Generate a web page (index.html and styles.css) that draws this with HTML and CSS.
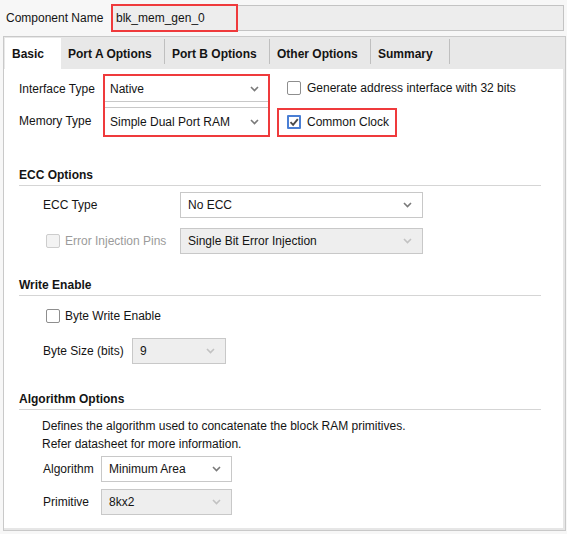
FILE: index.html
```html
<!DOCTYPE html>
<html lang="en">
<head>
    <meta charset="UTF-8">
    <title>Block Memory Generator</title>
    <link rel="stylesheet" href="styles.css">
</head>
<body>
    <!-- Nom du composant -->
    <div class="name-row">
        <span class="name-label">Component Name</span>
        <div class="name-field">
            <span class="hl name-hl">blk_mem_gen_0</span>
        </div>
    </div>

    <div class="panel">
        <!-- Onglets -->
        <div class="tabs">
            <div class="tab tab-basic active">Basic</div>
            <div class="tab tab-porta">Port A Options</div>
            <div class="sep"></div>
            <div class="tab tab-portb">Port B Options</div>
            <div class="sep"></div>
            <div class="tab tab-other">Other Options</div>
            <div class="sep"></div>
            <div class="tab tab-summary">Summary</div>
            <div class="sep"></div>
        </div>

        <div class="content">
            <!-- Interface / Memory type -->
            <div class="top">
                <div class="top-labels">
                    <div class="lbl-row">Interface Type</div>
                    <div class="lbl-row tall">Memory Type</div>
                </div>
                <div class="hl hl-group">
                    <div class="select first">
                        <span>Native</span>
                        <svg class="chev" width="9" height="6" viewBox="0 0 9 6"><path d="M1 1l3.5 3.5L8 1" fill="none" stroke="#7a7a7a" stroke-width="1.6"/></svg>
                    </div>
                    <div class="select second">
                        <span>Simple Dual Port RAM</span>
                        <svg class="chev" width="9" height="6" viewBox="0 0 9 6"><path d="M1 1l3.5 3.5L8 1" fill="none" stroke="#7a7a7a" stroke-width="1.6"/></svg>
                    </div>
                </div>
                <div class="top-checks">
                    <div class="check-row gen-row">
                        <span class="cb"></span>
                        <span>Generate address interface with 32 bits</span>
                    </div>
                    <div class="check-row hl cc-hl">
                        <span class="cb checked">
                            <svg width="10" height="10" viewBox="0 0 10 10"><path d="M1.5 5.2l2.6 2.6L8.8 2.2" fill="none" stroke="#4a4a4a" stroke-width="1.9"/></svg>
                        </span>
                        <span>Common Clock</span>
                    </div>
                </div>
            </div>

            <!-- ECC -->
            <div class="section-title ecc-title">ECC Options</div>
            <div class="field-row">
                <span class="lbl ecc-lbl">ECC Type</span>
                <div class="select ecc-select">
                    <span>No ECC</span>
                    <svg class="chev" width="9" height="6" viewBox="0 0 9 6"><path d="M1 1l3.5 3.5L8 1" fill="none" stroke="#7a7a7a" stroke-width="1.6"/></svg>
                </div>
            </div>
            <div class="field-row">
                <span class="lbl ecc-lbl check-row disabled-text inj">
                    <span class="cb disabled"></span>
                    <span>Error Injection Pins</span>
                </span>
                <div class="select ecc-select disabled">
                    <span>Single Bit Error Injection</span>
                    <svg class="chev" width="9" height="6" viewBox="0 0 9 6"><path d="M1 1l3.5 3.5L8 1" fill="none" stroke="#c2c2c2" stroke-width="1.6"/></svg>
                </div>
            </div>

            <!-- Write enable -->
            <div class="section-title write-title">Write Enable</div>
            <div class="field-row check-line">
                <span class="check-row inj">
                    <span class="cb"></span>
                    <span>Byte Write Enable</span>
                </span>
            </div>
            <div class="field-row byte-row">
                <span class="lbl byte-lbl">Byte Size (bits)</span>
                <div class="select byte-select disabled">
                    <span>9</span>
                    <svg class="chev" width="9" height="6" viewBox="0 0 9 6"><path d="M1 1l3.5 3.5L8 1" fill="none" stroke="#c2c2c2" stroke-width="1.6"/></svg>
                </div>
            </div>

            <!-- Algorithm -->
            <div class="section-title algo-title">Algorithm Options</div>
            <p class="desc">Defines the algorithm used to concatenate the block RAM primitives.<br>Refer datasheet for more information.</p>
            <div class="field-row algo-row">
                <span class="lbl algo-lbl">Algorithm</span>
                <div class="select algo-select">
                    <span>Minimum Area</span>
                    <svg class="chev" width="9" height="6" viewBox="0 0 9 6"><path d="M1 1l3.5 3.5L8 1" fill="none" stroke="#7a7a7a" stroke-width="1.6"/></svg>
                </div>
            </div>
            <div class="field-row prim-row">
                <span class="lbl algo-lbl">Primitive</span>
                <div class="select algo-select disabled">
                    <span>8kx2</span>
                    <svg class="chev" width="9" height="6" viewBox="0 0 9 6"><path d="M1 1l3.5 3.5L8 1" fill="none" stroke="#c2c2c2" stroke-width="1.6"/></svg>
                </div>
            </div>
        </div>
    </div>
</body>
</html>
```

FILE: styles.css
```css
/* Base */
* {
    margin: 0;
    padding: 0;
    box-sizing: border-box;
}

body {
    width: 567px;
    height: 534px;
    overflow: hidden;
    background: #f7f7f7;
    font-family: "Liberation Sans", Arial, sans-serif;
    font-size: 12px;
    color: #141414;
}

/* Annotation rouge */
.hl {
    border: 2px solid #ef3a3c;
}

/* Component name */
.name-row {
    display: flex;
    align-items: center;
    height: 26px;
    margin: 5px 3px 0 6px;
}

.name-label {
    width: 105px;
}

.name-field {
    flex: 1;
    height: 26px;
    display: flex;
    background: #ededed;
    border: 1px solid #c3c3c3;
}

.name-hl {
    width: 127px;
    margin: -2px 0 -2px -1px;
    display: flex;
    align-items: center;
    padding-left: 3px;
}

/* Panneau */
.panel {
    margin: 5px 1px 0 3px;
    height: 495px;
    border: 1px solid #c9c9c9;
}

.tabs {
    display: flex;
    align-items: flex-start;
    height: 32px;
    padding: 1px 0 0 1px;
    background: #e8e8e8;
}

.tab {
    height: 31px;
    display: flex;
    align-items: center;
    padding-left: 7px;
    font-weight: bold;
}

.tab.active {
    background: #fff;
}

.tab-basic { width: 56px; }
.tab-porta { width: 103px; }
.tab-portb { width: 104px; }
.tab-other { width: 100px; }
.tab-summary { width: 78px; }

.sep {
    width: 1px;
    height: 25px;
    margin-top: 1px;
    background: #bfbfbf;
}

.content {
    height: 461px;
    padding: 5px 0 0 15px;
    background: #fff;
    border-right: 2px solid #e6e6e6;
    border-bottom: 2px solid #e6e6e6;
}

/* Selects */
.select {
    display: flex;
    align-items: center;
    height: 26px;
    padding: 0 10px 0 7px;
    background: #fff;
    border: 1px solid #c8c8c8;
}

.select .chev {
    margin-left: auto;
}

.select.disabled {
    background: #eeeeee;
}

/* Bloc du haut */
.top {
    display: flex;
    height: 63px;
}

.top-labels {
    width: 84px;
    display: flex;
    flex-direction: column;
    gap: 5px;
    padding-top: 2px;
}

.lbl-row {
    height: 26px;
    display: flex;
    align-items: center;
}

.lbl-row.tall {
    height: 28px;
}

.hl-group {
    width: 167px;
    display: flex;
    flex-direction: column;
    gap: 5px;
}

.hl-group .select {
    border: none;
    padding: 0 9px 0 5px;
}

.hl-group .first {
    border-bottom: 1px solid #c8c8c8;
}

.hl-group .second {
    height: 28px;
    border-top: 1px solid #c8c8c8;
}

.top-checks {
    margin-left: 7px;
    display: flex;
    flex-direction: column;
    align-items: flex-start;
}

.check-row {
    display: flex;
    align-items: center;
    gap: 6px;
}

.gen-row {
    height: 30px;
    padding-left: 10px;
}

.cc-hl {
    height: 30px;
    margin-top: 5px;
    padding: 0 6px 0 8px;
}

/* Cases à cocher */
.cb {
    width: 14px;
    height: 14px;
    flex: none;
    background: #fff;
    border: 1px solid #8e8e8e;
    border-radius: 2px;
}

.cb.disabled {
    background: #f3f3f3;
    border-color: #cdcdcd;
}

.cb.checked {
    display: flex;
    align-items: center;
    justify-content: center;
    border: 2px solid #4a7fd4;
    border-radius: 1px;
}

/* Sections */
.section-title {
    width: 522px;
    font-weight: bold;
    line-height: 14px;
    padding-bottom: 3px;
    border-bottom: 1px solid #d5d5d5;
}

.ecc-title { margin-top: 31px; }
.write-title { margin-top: 24px; }
.algo-title { margin-top: 28px; }

.field-row {
    display: flex;
    align-items: center;
    margin-top: 10px;
    padding-left: 24px;
}

.section-title + .field-row {
    margin-top: 6px;
}

.lbl {
    flex: none;
}

.ecc-lbl { width: 137px; }
.ecc-select { width: 243px; }

.inj {
    padding-left: 3px;
    gap: 5px;
}

.disabled-text {
    color: #9b9b9b;
}

.check-line {
    height: 26px;
}

.section-title + .check-line {
    margin-top: 7px;
}

.byte-row {
    margin-top: 9px;
}

.byte-lbl { width: 89px; }
.byte-select { width: 94px; }

.desc {
    margin-top: 7px;
    padding-left: 23px;
    line-height: 18px;
}

.algo-row {
    margin-top: 3px;
}

.prim-row {
    margin-top: 7px;
}

.algo-lbl { width: 58px; }
.algo-select { width: 131px; }
```
